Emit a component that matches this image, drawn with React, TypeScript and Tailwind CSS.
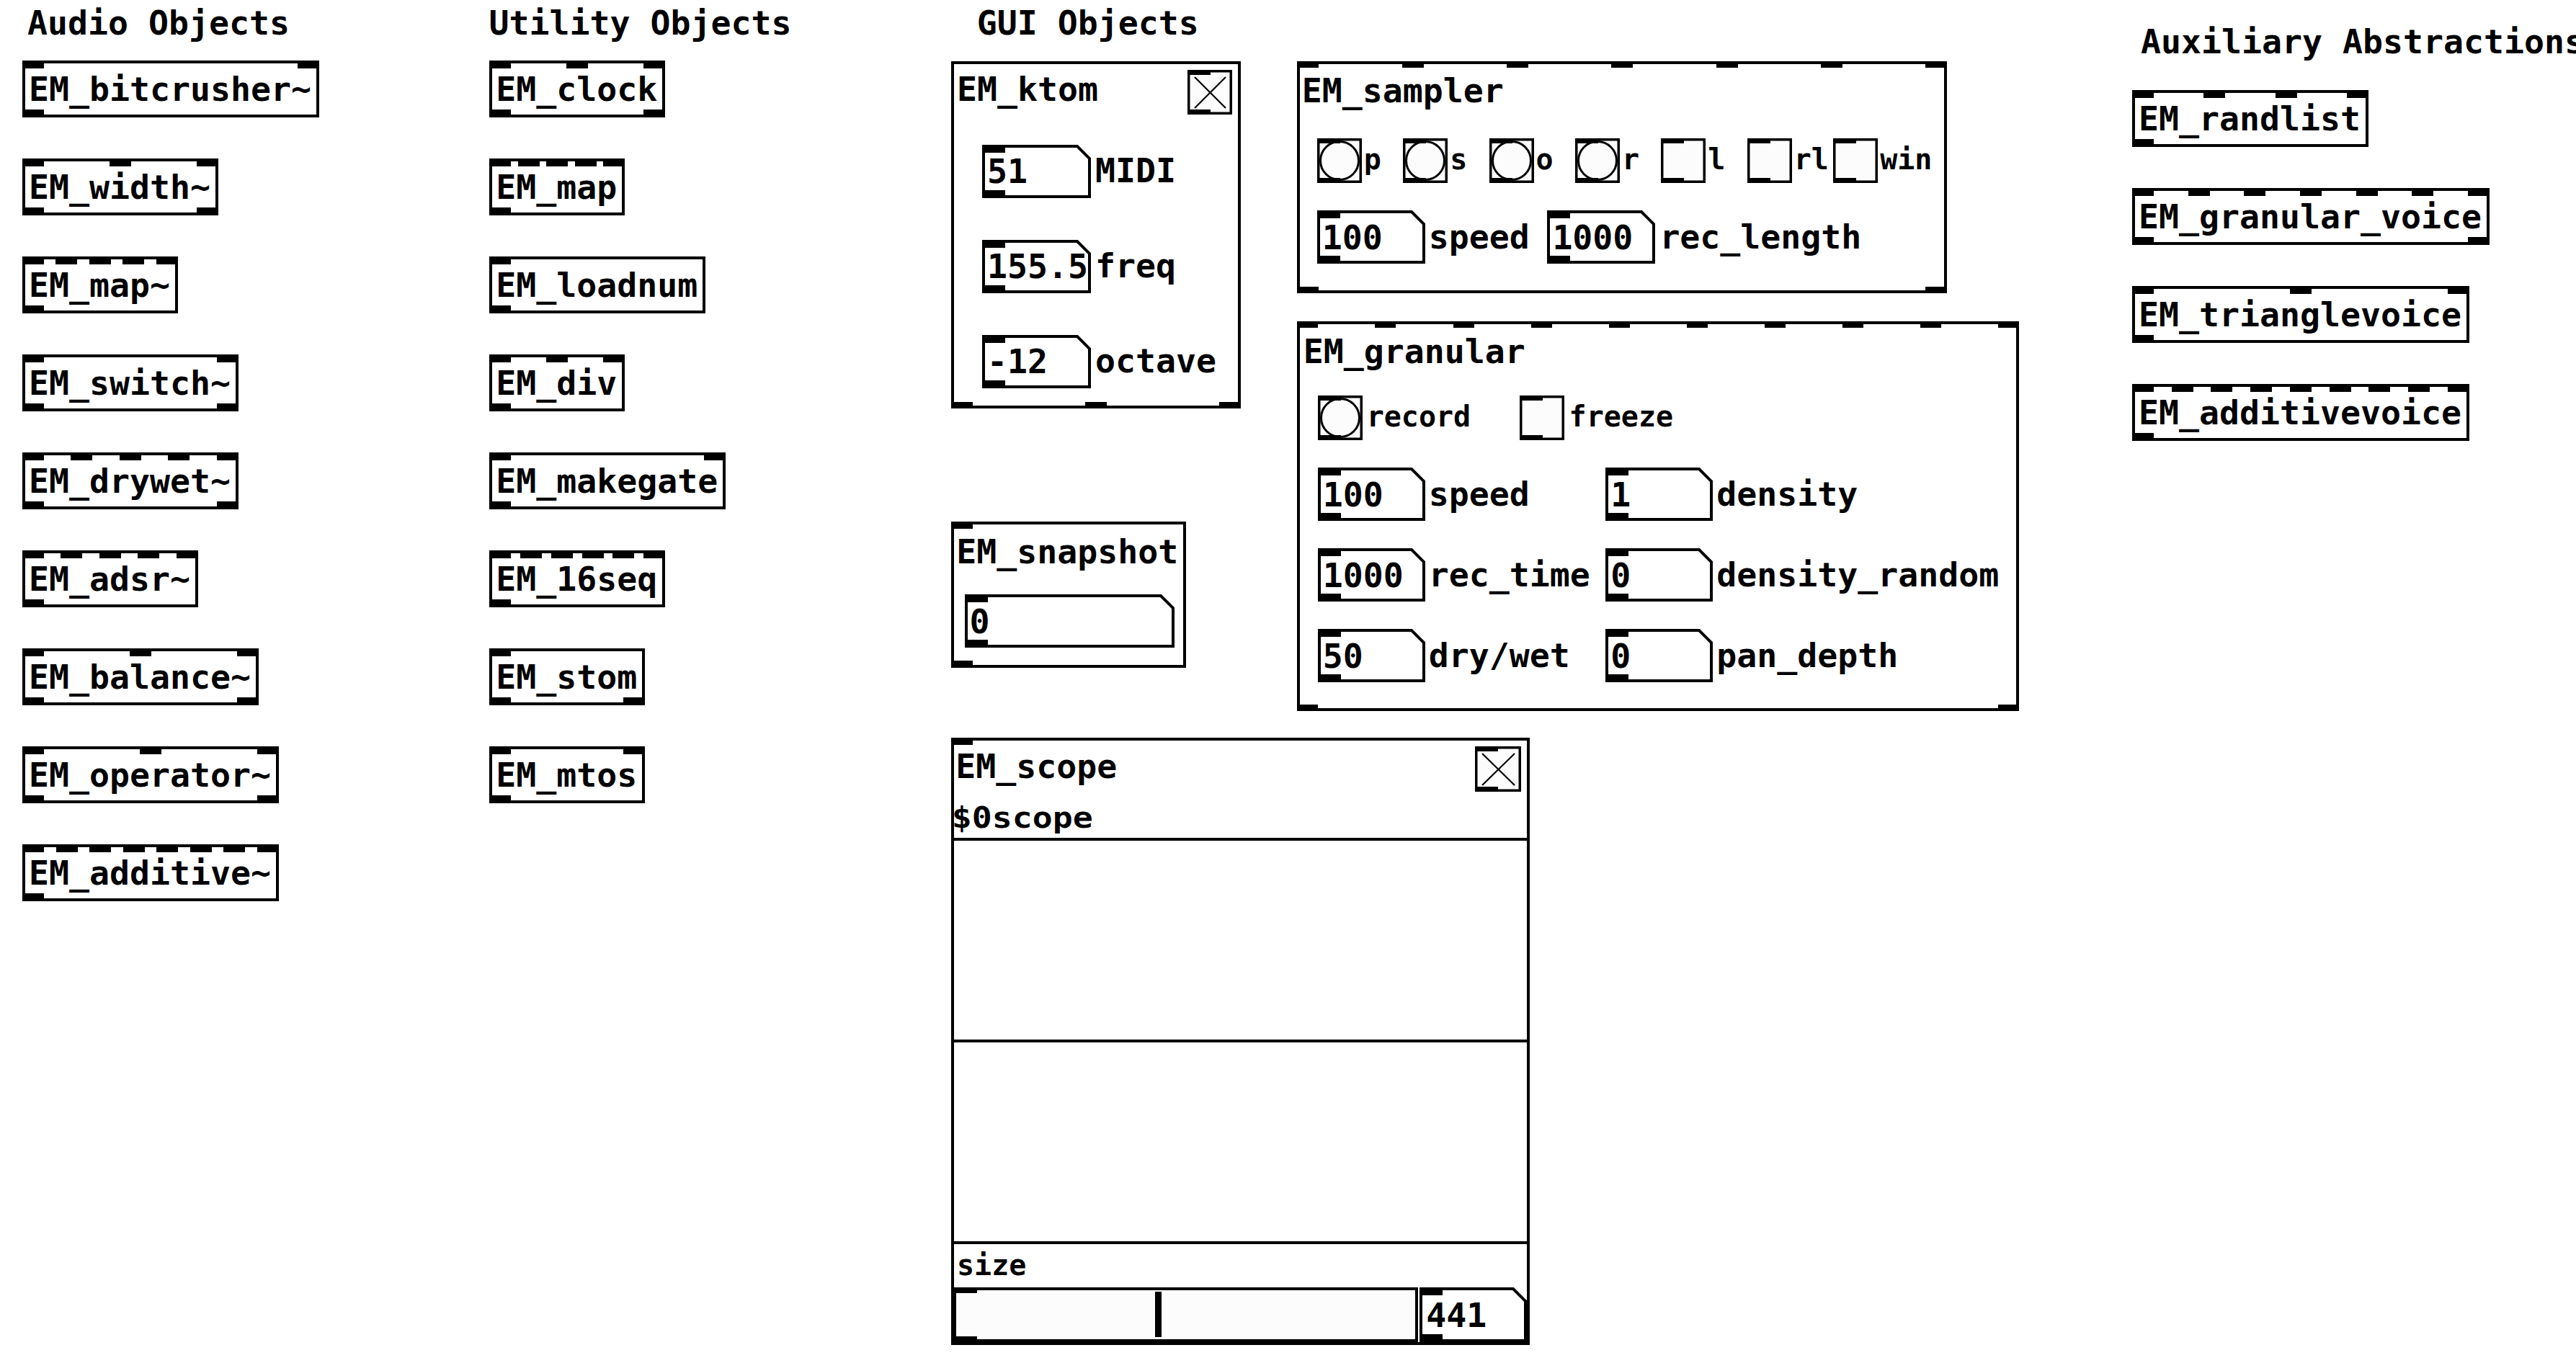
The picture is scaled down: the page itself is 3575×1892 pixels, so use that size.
import React from "react";

const T = "text-[46.5px] leading-none whitespace-nowrap";
const S = "text-[40px] leading-none whitespace-nowrap";
const TOP = "-left-1 -right-1 -top-1";
const BOTTOM = "-left-1 -right-1 -bottom-1";

function Ports({ n, pos, port }: { n: number; pos: string; port: string }) {
  return (
    <div className={`pointer-events-none absolute flex justify-between ${pos}`}>
      {Array.from({ length: n }, (_, i) => (
        <div key={i} className={`bg-black ${port}`} />
      ))}
    </div>
  );
}

function Obj({ name, ins, outs }: { name: string; ins: number; outs: number }) {
  return (
    <div className="relative flex h-[79px] items-center border-4 border-black bg-white pl-[5px] pr-[7px]">
      <span className={`${T} pt-[2px]`}>{name}</span>
      <Ports n={ins} pos={TOP} port="h-[11px] w-[30px]" />
      <Ports n={outs} pos={BOTTOM} port="h-[11px] w-[30px]" />
    </div>
  );
}

function NumBox({
  w,
  h,
  cls,
  value,
  pl = "pl-[7px]",
}: {
  w: number;
  h: number;
  cls: string;
  value: string;
  pl?: string;
}) {
  const s = 4;
  const c = 19;
  return (
    <div className={`relative shrink-0 ${cls}`}>
      <svg className="absolute left-0 top-0" width={w} height={h}>
        <polygon
          points={`${s / 2},${s / 2} ${w - c},${s / 2} ${w - s / 2},${c} ${w - s / 2},${h - s / 2} ${s / 2},${h - s / 2}`}
          fill="#fff"
          stroke="#000"
          strokeWidth={s}
        />
        <rect x={0} y={0} width={32} height={11} fill="#000" />
        <rect x={0} y={h - 11} width={32} height={11} fill="#000" />
      </svg>
      <div className={`relative flex h-full items-center pt-[2px] ${T} ${pl}`}>{value}</div>
    </div>
  );
}

function Bang({ size = 62 }: { size?: number }) {
  const r = size / 2;
  return (
    <svg width={size} height={size} className="shrink-0">
      <rect x={1.75} y={1.75} width={size - 3.5} height={size - 3.5} fill="#fcfcfc" stroke="#000" strokeWidth={3.5} />
      <circle cx={r} cy={r} r={r - 4.5} fill="none" stroke="#000" strokeWidth={3} />
      <rect x={0} y={0} width={32} height={7} fill="#000" />
      <rect x={0} y={size - 7} width={32} height={7} fill="#000" />
    </svg>
  );
}

function Toggle({ w = 62, h = 62, x = false }: { w?: number; h?: number; x?: boolean }) {
  return (
    <svg width={w} height={h} className="shrink-0">
      <rect x={1.75} y={1.75} width={w - 3.5} height={h - 3.5} fill="#fcfcfc" stroke="#000" strokeWidth={3.5} />
      {x && (
        <>
          <line x1={10} y1={10} x2={w - 9} y2={h - 9} stroke="#000" strokeWidth={2.2} />
          <line x1={w - 9} y1={10} x2={10} y2={h - 9} stroke="#000" strokeWidth={2.2} />
        </>
      )}
      <rect x={0} y={0} width={32} height={7} fill="#000" />
      <rect x={0} y={h - 7} width={32} height={7} fill="#000" />
    </svg>
  );
}

const audio: [string, number, number][] = [
  ["EM_bitcrusher~", 2, 1],
  ["EM_width~", 3, 2],
  ["EM_map~", 5, 1],
  ["EM_switch~", 2, 2],
  ["EM_drywet~", 5, 2],
  ["EM_adsr~", 5, 1],
  ["EM_balance~", 3, 2],
  ["EM_operator~", 3, 2],
  ["EM_additive~", 8, 1],
];

const utility: [string, number, number][] = [
  ["EM_clock", 3, 2],
  ["EM_map", 5, 1],
  ["EM_loadnum", 1, 1],
  ["EM_div", 3, 1],
  ["EM_makegate", 2, 1],
  ["EM_16seq", 6, 1],
  ["EM_stom", 1, 2],
  ["EM_mtos", 2, 1],
];

const aux: [string, number, number][] = [
  ["EM_randlist", 4, 1],
  ["EM_granular_voice", 7, 2],
  ["EM_trianglevoice", 3, 1],
  ["EM_additivevoice", 9, 1],
];

const samplerItems: [string, "b" | "t"][] = [
  ["p", "b"],
  ["s", "b"],
  ["o", "b"],
  ["r", "b"],
  ["l", "t"],
  ["rl", "t"],
  ["win", "t"],
];

const granRows: [string, string, string, string][] = [
  ["100", "speed", "1", "density"],
  ["1000", "rec_time", "0", "density_random"],
  ["50", "dry/wet", "0", "pan_depth"],
];

function Column({ items, cls }: { items: [string, number, number][]; cls: string }) {
  return (
    <div className={`absolute flex flex-col items-start gap-[57px] ${cls}`}>
      {items.map(([n, i, o]) => (
        <Obj key={n} name={n} ins={i} outs={o} />
      ))}
    </div>
  );
}

export default function App() {
  return (
    <div className="relative h-[1892px] w-[3575px] overflow-hidden bg-white font-['DejaVu_Sans_Mono',monospace] font-bold text-black">
      {/* titles */}
      <div className={`absolute left-[38px] top-[8.6px] ${T}`}>Audio Objects</div>
      <div className={`absolute left-[678.5px] top-[8.6px] ${T}`}>Utility Objects</div>
      <div className={`absolute left-[1355.7px] top-[8.6px] ${T}`}>GUI Objects</div>
      <div className={`absolute left-[2971px] top-[35.4px] ${T}`}>Auxiliary Abstractions</div>

      <Column items={audio} cls="left-[31px] top-[84px]" />
      <Column items={utility} cls="left-[679.3px] top-[84px]" />
      <Column items={aux} cls="left-[2959px] top-[124.5px]" />

      {/* EM_ktom */}
      <div className="absolute left-[1320px] top-[85px] flex h-[482px] w-[402px] flex-col border-4 border-black bg-white pl-[4px] pr-[8.3px] pt-[7.7px]">
        <div className="flex items-start justify-between">
          <span className={`mt-[4.6px] ${T}`}>EM_ktom</span>
          <Toggle x />
        </div>
        <div className="ml-[35px] mt-[42px] flex flex-col gap-[58px]">
          {[
            ["51", "MIDI"],
            ["155.5", "freq"],
            ["-12", "octave"],
          ].map(([v, l]) => (
            <div key={l} className="flex items-center">
              <NumBox w={151} h={74} cls="h-[74px] w-[151px]" value={v} />
              <span className={`ml-[6px] ${T}`}>{l}</span>
            </div>
          ))}
        </div>
        <Ports n={3} pos={BOTTOM} port="h-[9px] w-[30px]" />
      </div>

      {/* EM_snapshot */}
      <div className="absolute left-[1319.7px] top-[724.3px] flex h-[203px] w-[326px] flex-col border-4 border-black bg-white pl-[3.5px] pt-[14.6px]">
        <span className={T}>EM_snapshot</span>
        <div className="ml-[12.3px] mt-[35.6px]">
          <NumBox w={291} h={74} cls="h-[74px] w-[291px]" value="0" pl="pl-[6px]" />
        </div>
        <Ports n={1} pos={TOP} port="h-[10px] w-[30px]" />
        <Ports n={1} pos={BOTTOM} port="h-[10px] w-[30px]" />
      </div>

      {/* EM_sampler */}
      <div className="absolute left-[1800.2px] top-[85px] flex h-[322px] w-[902px] flex-col border-4 border-black bg-white pl-[2.5px] pt-[13.9px]">
        <span className={T}>EM_sampler</span>
        <div className="ml-[21.1px] mt-[42.9px] flex">
          {samplerItems.map(([l, k]) => (
            <div key={l} className="flex w-[119.4px] items-center">
              {k === "b" ? <Bang /> : <Toggle />}
              <span className={`ml-[3px] pb-[4px] ${S}`}>{l}</span>
            </div>
          ))}
        </div>
        <div className="ml-[21.1px] mt-[38px] flex">
          <div className="flex w-[319.6px] items-center">
            <NumBox w={150} h={74} cls="h-[74px] w-[150px]" value="100" />
            <span className={`ml-[5px] ${T}`}>speed</span>
          </div>
          <div className="flex items-center">
            <NumBox w={150} h={74} cls="h-[74px] w-[150px]" value="1000" />
            <span className={`ml-[6px] ${T}`}>rec_length</span>
          </div>
        </div>
        <Ports n={7} pos={TOP} port="h-[9px] w-[30px]" />
        <Ports n={2} pos={BOTTOM} port="h-[9px] w-[30px]" />
      </div>

      {/* EM_granular */}
      <div className="absolute left-[1800.3px] top-[445.6px] flex h-[541px] w-[1002px] flex-col border-4 border-black bg-white pl-[4.4px] pt-[15.6px]">
        <span className={T}>EM_granular</span>
        <div className="ml-[20px] mt-[37.3px] flex">
          <div className="flex w-[279.9px] items-center">
            <Bang />
            <span className={`ml-[6px] pb-[4px] ${S}`}>record</span>
          </div>
          <div className="flex items-center">
            <Toggle />
            <span className={`ml-[7px] pb-[4px] ${S}`}>freeze</span>
          </div>
        </div>
        <div className="ml-[20px] mt-[38.3px] flex flex-col gap-[38px]">
          {granRows.map(([v1, l1, v2, l2]) => (
            <div key={l1} className="flex">
              <div className="flex w-[399.6px] items-center">
                <NumBox w={149} h={74} cls="h-[74px] w-[149px]" value={v1} />
                <span className={`ml-[5px] ${T}`}>{l1}</span>
              </div>
              <div className="flex items-center">
                <NumBox w={149} h={74} cls="h-[74px] w-[149px]" value={v2} />
                <span className={`ml-[5px] ${T}`}>{l2}</span>
              </div>
            </div>
          ))}
        </div>
        <Ports n={10} pos={TOP} port="h-[9px] w-[29px]" />
        <Ports n={2} pos={BOTTOM} port="h-[9px] w-[29px]" />
      </div>

      {/* EM_scope */}
      <div className="absolute left-[1319.7px] top-[1024.3px] flex h-[843px] w-[803px] flex-col border-4 border-black bg-white">
        <div className="flex items-start justify-between pl-[2.5px] pr-[8px] pt-[7.7px]">
          <span className={`mt-[5.3px] ${T}`}>EM_scope</span>
          <Toggle w={64} h={63} x />
        </div>
        <div className={`-ml-[3px] mt-[13.4px] scale-y-[0.88] ${T}`}>$0scope</div>
        <div className="mt-[4.4px] flex h-[564px] flex-col border-y-4 border-black">
          <div className="flex-1 border-b-4 border-black" />
          <div className="flex-1" />
        </div>
        <span className={`ml-[4.3px] mt-[8.9px] ${S}`}>size</span>
        <div className="-ml-[0.7px] mt-auto flex gap-[1.5px]">
          <div className="relative h-[76px] w-[645px] shrink-0 border-4 border-black bg-[#fcfcfc]">
            <div className="absolute bottom-[3px] left-[276px] top-[2px] w-[9px] bg-black" />
            <div className="absolute -left-1 -top-1 h-[8px] w-[33px] bg-black" />
            <div className="absolute -bottom-1 -left-1 h-[8px] w-[33px] bg-black" />
          </div>
          <NumBox w={149} h={76} cls="h-[76px] w-[149px]" value="441" pl="pl-[9.7px]" />
        </div>
        <Ports n={1} pos={TOP} port="h-[10px] w-[30px]" />
      </div>
    </div>
  );
}
